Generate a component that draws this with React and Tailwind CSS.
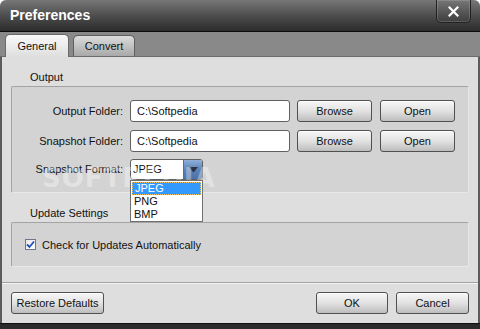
import React from "react";

const font = { fontFamily: '"Liberation Sans", Arial, sans-serif' };

function Btn({ children, w }) {
  return (
    <div
      className={`h-[22px] ${w} flex items-center justify-center rounded-[3px] border border-[#505050] bg-gradient-to-b from-[#f7f7f7] via-[#e2e2e2] to-[#bdbdbd] text-[11px] text-[#111] shadow-[inset_0_1px_0_#ffffff]`}
    >
      {children}
    </div>
  );
}

function Input({ value }) {
  return (
    <div className="h-[22px] w-[160px] rounded-[3px] border border-[#606060] bg-white flex items-center pl-[6px] text-[11px] text-[#111]">
      {value}
    </div>
  );
}

export default function App() {
  return (
    <div className="w-[480px] h-[329px] bg-white" style={font}>
      <div className="w-[480px] h-[329px] flex flex-col rounded-t-[6px] overflow-hidden bg-[#dedede]">
        {/* title bar */}
        <div className="h-[32px] shrink-0 flex items-start justify-between bg-gradient-to-b from-[#777777] via-[#4e4e4e] to-[#2c2c2c] border-b border-[#0c0c0c] relative">
          <div className="pl-[10px] pt-[7px] text-[14px] font-bold text-white leading-[16px]">
            Preferences
          </div>
          <div className="mr-[9px] w-[35px] h-[23px] rounded-b-[5px] border border-t-0 border-[#222] shadow-[inset_0_0_0_1px_rgba(255,255,255,0.15)] flex items-center justify-center">
            <svg width="11" height="11" viewBox="0 0 11 11">
              <path d="M1.5 1.5 L9.5 9.5 M9.5 1.5 L1.5 9.5" stroke="#fff" strokeWidth="2.2" strokeLinecap="square" />
            </svg>
          </div>
        </div>
        {/* tab strip */}
        <div className="h-[25px] shrink-0 bg-[#898989] border-b border-[#6c6c6c] flex items-end pl-[5px] gap-[4px]">
          <div className="relative top-[1px] h-[23px] w-[64px] rounded-t-[5px] border border-b-0 border-[#6a6a6a] bg-gradient-to-b from-[#fafafa] to-[#dedede] flex items-center justify-center text-[11px] text-[#111]">
            General
          </div>
          <div className="h-[21px] w-[62px] rounded-t-[5px] border border-b-0 border-[#5e5e5e] bg-gradient-to-b from-[#dcdcdc] to-[#a9a9a9] flex items-center justify-center text-[11px] text-[#111]">
            Convert
          </div>
        </div>
        {/* content */}
        <div className="flex-1 flex flex-col border-x-2 border-[#5c5c5c] relative">
          <div className="h-[29px] pt-[13px] pl-[28px] text-[11px] text-[#111] leading-[14px]">Output</div>
          <div className="mx-[9px] h-[107px] bg-[#d3d3d3] border-t border-l border-[#a3a3a3] border-r border-r-[#e6e6e6] border-b border-b-[#e8e8e8] rounded-[2px] pt-[13px] flex flex-col">
            <div className="flex items-center h-[22px]">
              <div className="w-[111px] text-right text-[11px] text-[#111]">Output Folder:</div>
              <div className="ml-[7px]"><Input value="C:\Softpedia" /></div>
              <div className="ml-[7px]"><Btn w="w-[75px]">Browse</Btn></div>
              <div className="ml-[8px]"><Btn w="w-[75px]">Open</Btn></div>
            </div>
            <div className="flex items-center h-[22px] mt-[8px]">
              <div className="w-[111px] text-right text-[11px] text-[#111]">Snapshot Folder:</div>
              <div className="ml-[7px]"><Input value="C:\Softpedia" /></div>
              <div className="ml-[7px]"><Btn w="w-[75px]">Browse</Btn></div>
              <div className="ml-[8px]"><Btn w="w-[75px]">Open</Btn></div>
            </div>
            <div className="flex items-center h-[21px] mt-[7px]">
              <div className="w-[111px] text-right text-[11px] text-[#111]">Snapshot Format:</div>
              <div className="ml-[7px] relative">
                <div className="h-[21px] w-[73px] rounded-[3px] border border-[#606060] bg-white flex overflow-hidden">
                  <div className="flex-1 flex items-center pl-[2px] text-[11px] text-[#111]">JPEG</div>
                  <div className="w-[19px] bg-gradient-to-b from-[#8fb0da] via-[#5c82b8] to-[#4a70a8] border-l border-[#5a6f90] flex items-center justify-center">
                    <svg width="9" height="6" viewBox="0 0 9 6">
                      <path d="M0 0 H9 L4.5 5.5 Z" fill="#2a3345" />
                    </svg>
                  </div>
                </div>
                <div className="absolute left-0 top-[21px] w-[73px] h-[42px] border border-[#707070] bg-white z-10 pt-[1px]">
                  <div className="mx-[1px] h-[13px] bg-[#3399ff] border border-dotted border-[#f5c060] flex items-center pl-[2px] text-[11px] text-white leading-none">JPEG</div>
                  <div className="h-[13px] flex items-center pl-[3px] text-[11px] text-[#111] leading-none">PNG</div>
                  <div className="h-[13px] flex items-center pl-[3px] text-[11px] text-[#111] leading-none">BMP</div>
                </div>
              </div>
            </div>
          </div>
          <div className="h-[29px] pt-[13px] pl-[28px] text-[11px] text-[#111] leading-[14px]">Update Settings</div>
          <div className="mx-[9px] h-[45px] bg-[#d3d3d3] border-t border-l border-[#a3a3a3] border-r border-r-[#e6e6e6] border-b border-b-[#e8e8e8] rounded-[2px] flex items-start pt-[16px] pl-[13px]">
            <div className="w-[11px] h-[11px] border border-[#6c7888] bg-gradient-to-br from-[#e8e8e8] to-white flex items-center justify-center">
              <svg width="9" height="9" viewBox="0 0 9 9">
                <path d="M1 4.5 L3.5 7 L8 1.5" stroke="#1f4fb8" strokeWidth="1.8" fill="none" />
              </svg>
            </div>
            <div className="ml-[6px] text-[11px] text-[#111] leading-[12px]">Check for Updates Automatically</div>
          </div>
          <div className="mt-[15px] h-[2px] border-t border-[#a2a2a2] border-b border-b-[#f4f4f4]" />
          <div className="mt-[8px] flex items-center px-[9px]">
            <Btn w="w-[93px]">Restore Defaults</Btn>
            <div className="ml-auto flex gap-[8px]">
              <Btn w="w-[72px]">OK</Btn>
              <Btn w="w-[73px]">Cancel</Btn>
            </div>
          </div>
          {/* watermark */}
          <div className="absolute left-[40px] top-[102px] text-[26px] font-bold tracking-[1px] text-white/35 pointer-events-none select-none" style={{ fontFamily: '"DejaVu Sans", sans-serif' }}>
            SOFTPEDIA
          </div>
        </div>
        <div className="h-[6px] shrink-0 bg-[#2a2a2a] border-t border-[#111]" />
      </div>
    </div>
  );
}
